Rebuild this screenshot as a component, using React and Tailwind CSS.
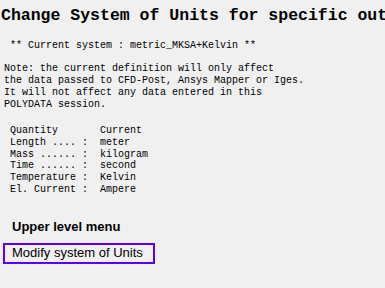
import React from "react";

const mono = { fontFamily: '"Liberation Mono", "DejaVu Sans Mono", monospace' };

const noteLines = [
  "Note: the current definition will only affect",
  "the data passed to CFD-Post, Ansys Mapper or Iges.",
  "It will not affect any data entered in this",
  "POLYDATA session.",
];

const tableLines = [
  " Quantity       Current",
  " Length .... :  meter",
  " Mass ...... :  kilogram",
  " Time ...... :  second",
  " Temperature :  Kelvin",
  " El. Current :  Ampere",
];

const App = () => {
  return (
    <div className="w-full h-[288px] overflow-hidden bg-[#f0f0f0] text-black">
      <h1
        className="pt-[6px] pl-[1px] text-[16.5px] leading-[20px] font-bold whitespace-pre"
        style={mono}
      >
        Change System of Units for specific output
      </h1>

      <pre className="mt-[14px] pl-[4px] text-[10px] leading-[12px]" style={mono}>
        {" ** Current system : metric_MKSA+Kelvin **"}
      </pre>

      <pre className="mt-[11px] pl-[4px] text-[10px] leading-[12px]" style={mono}>
        {noteLines.join("\n")}
      </pre>

      <pre className="mt-[14px] pl-[4px] text-[10px] leading-[11.8px]" style={mono}>
        {tableLines.join("\n")}
      </pre>

      <div className="mt-[23px] pl-[12px] font-['Liberation_Sans',Arial,sans-serif]">
        <p className="text-[13px] leading-[15px] font-bold">Upper level menu</p>
      </div>

      <div className="mt-[9px] pl-[3px] font-['Liberation_Sans',Arial,sans-serif]">
        <button className="block w-[152px] border-2 border-[#5a00ff] pl-[7px] pb-[2px] text-left text-[13px] leading-[15px]">
          Modify system of Units
        </button>
      </div>
    </div>
  );
};

export default App;
